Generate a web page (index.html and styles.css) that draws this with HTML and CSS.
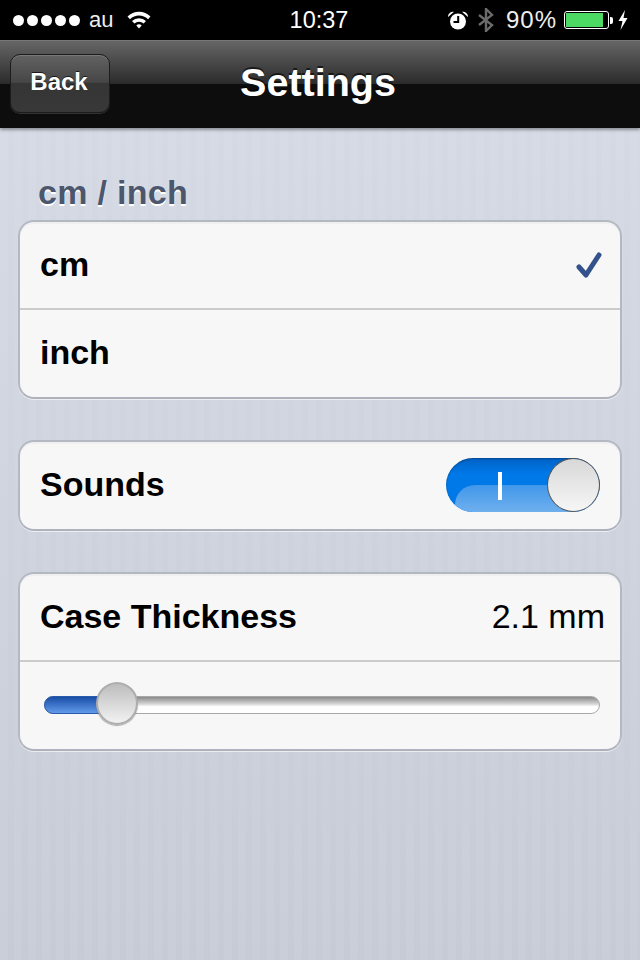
FILE: index.html
```html
<!DOCTYPE html>
<html>

<head>
    <title>Settings</title>
    <link rel="stylesheet" href="styles.css">
</head>

<body>
    <div class="status-bar">
        <div class="status-left">
            <div class="signal">
                <span></span><span></span><span></span><span></span><span></span>
            </div>
            <span class="carrier">au</span>
            <svg class="wifi" width="26" height="20" viewBox="0 0 26 20">
                <path d="M1.5 7.5 A16.5 16.5 0 0 1 24.5 7.5 L22 10.2 A13 13 0 0 0 4 10.2 Z" fill="#fff"/>
                <path d="M6 12 A10 10 0 0 1 20 12 L17.6 14.6 A6.6 6.6 0 0 0 8.4 14.6 Z" fill="#fff"/>
                <path d="M10.3 16.4 A4 4 0 0 1 15.7 16.4 L13 19.4 Z" fill="#fff"/>
            </svg>
        </div>
        <div class="time">10:37</div>
        <div class="status-right">
            <svg class="alarm" width="20" height="19" viewBox="0 0 20 19">
                <circle cx="10" cy="10.5" r="8" fill="#fff"/>
                <path d="M0 6 L6 0.8 A5 5 0 0 0 0 6 Z M20 6 L14 0.8 A5 5 0 0 1 20 6 Z" fill="#fff"/>
                <path d="M10.2 5 V11 H5.5" fill="none" stroke="#000" stroke-width="2"/>
            </svg>
            <svg class="bluetooth" width="16" height="24" viewBox="0 0 16 24">
                <path d="M1 7 L14 17 L8 23 V1 L14 7 L1 17" fill="none" stroke="#6a6a6a" stroke-width="2.4"/>
            </svg>
            <span class="percent">90%</span>
            <div class="battery">
                <div class="battery-level"></div>
            </div>
            <div class="battery-nub"></div>
            <svg class="bolt" width="10" height="20" viewBox="0 0 10 20">
                <path d="M7 0 L0.5 11 H4.5 L2.5 20 L9.5 8 H5.5 Z" fill="#fff"/>
            </svg>
        </div>
    </div>

    <div class="nav-bar">
        <div class="nav-left">
            <button class="back-button">Back</button>
        </div>
        <h1 class="nav-title">Settings</h1>
        <div></div>
    </div>

    <div class="content">
        <h2 class="group-title">cm / inch</h2>
        <div class="group">
            <div class="row row-first">
                <span class="label">cm</span>
                <svg class="check" width="28" height="28" viewBox="0 0 28 28">
                    <path d="M4 15 L11 23 L24 3" fill="none" stroke="#33518a" stroke-width="5" stroke-linecap="round" stroke-linejoin="round"/>
                </svg>
            </div>
            <div class="row row-last">
                <span class="label">inch</span>
            </div>
        </div>

        <div class="group">
            <div class="row row-single">
                <span class="label">Sounds</span>
                <div class="switch">
                    <div class="switch-gloss"></div>
                    <div class="switch-mark"></div>
                    <div class="switch-thumb"></div>
                </div>
            </div>
        </div>

        <div class="group">
            <div class="row row-first">
                <span class="label">Case Thickness</span>
                <span class="value">2.1 mm</span>
            </div>
            <div class="row row-last row-slider">
                <div class="slider">
                    <div class="slider-fill"></div>
                    <div class="slider-thumb"></div>
                </div>
            </div>
        </div>
    </div>
</body>

</html>
```

FILE: styles.css
```css
body {
    margin: 0;
    width: 640px;
    height: 960px;
    overflow: hidden;
    font-family: "Liberation Sans", Arial, sans-serif;
    background: repeating-linear-gradient(90deg, rgba(255, 255, 255, 0.05) 0, rgba(255, 255, 255, 0.05) 8px, rgba(0, 0, 0, 0) 8px, rgba(0, 0, 0, 0) 14px),
        linear-gradient(#d6dbe6, #c6cbd6);
}

.status-bar {
    height: 40px;
    background: #000;
    color: #fff;
    display: grid;
    grid-template-columns: 1fr auto 1fr;
    align-items: center;
}

.status-left,
.status-right {
    display: flex;
    align-items: center;
}

.status-left {
    padding-left: 13px;
}

.status-right {
    justify-content: flex-end;
    padding-right: 12px;
}

.signal {
    display: flex;
    gap: 3px;
}

.signal span {
    width: 11px;
    height: 11px;
    border-radius: 50%;
    background: #fff;
}

.carrier {
    font-size: 22px;
    margin-left: 9px;
    color: #eee;
}

.wifi {
    margin-left: 13px;
    margin-top: -2px;
}

.time {
    font-size: 23.5px;
    padding-right: 2px;
}

.bluetooth {
    margin-left: 10px;
}

.percent {
    font-size: 24px;
    letter-spacing: 1px;
    margin-left: 12px;
    color: #eee;
}

.battery {
    width: 45px;
    height: 18px;
    margin-left: 7px;
    box-sizing: border-box;
    border: 1px solid #fff;
    border-radius: 3px;
    padding: 1px;
}

.battery-level {
    width: 37px;
    height: 100%;
    background: #4cd964;
}

.battery-nub {
    width: 3px;
    height: 7px;
    background: #fff;
    margin-left: 1px;
    border-radius: 0 2px 2px 0;
}

.bolt {
    margin-left: 5px;
}

.nav-bar {
    height: 88px;
    box-sizing: border-box;
    border-top: 1px solid #777;
    background: linear-gradient(#666 0, #2b2b2b 49%, #0d0d0d 50%, #0d0d0d 100%);
    box-shadow: 0 2px 3px rgba(0, 0, 0, 0.35);
    display: grid;
    grid-template-columns: 1fr auto 1fr;
    align-items: center;
    color: #fff;
}

.nav-left {
    padding-left: 10px;
    padding-bottom: 3px;
}

.back-button {
    display: block;
    width: 100px;
    height: 59px;
    padding: 0 2px 3px 0;
    border: 1px solid #1c1c1c;
    border-radius: 10px;
    background: linear-gradient(#626262, #464646 48%, #353535 50%, #383838);
    box-shadow: inset 0 1px 0 rgba(255, 255, 255, 0.15), 0 1px 0 rgba(255, 255, 255, 0.15);
    color: #fff;
    font-family: inherit;
    font-size: 24px;
    font-weight: bold;
    text-shadow: 0 -1px 0 rgba(0, 0, 0, 0.7);
}

.nav-title {
    margin: 0;
    font-size: 39.5px;
    font-weight: bold;
    text-shadow: 0 -2px 0 rgba(0, 0, 0, 0.6);
    padding: 0 4px 4px 0;
}

.content {
    padding: 44px 18px 0;
}

.group-title {
    margin: 0 0 8px 20px;
    height: 40px;
    line-height: 40px;
    font-size: 34px;
    font-weight: bold;
    letter-spacing: 0.3px;
    color: #4c566c;
    text-shadow: 0 2px 0 #fff;
}

.group {
    background: #f7f7f7;
    border: 2px solid #b4b8c2;
    border-bottom-color: #aeb2bc;
    border-radius: 16px;
    box-shadow: 0 1px 0 rgba(255, 255, 255, 0.6), inset 0 2px 1px rgba(0, 0, 0, 0.03);
    margin-bottom: 41px;
}

.row {
    display: flex;
    align-items: center;
    justify-content: space-between;
    box-sizing: border-box;
    padding: 0 20px 2px;
}

.row-first {
    height: 88px;
    border-bottom: 2px solid #cbcbcb;
}

.row-last {
    height: 87px;
}

.row-single {
    height: 87px;
}

.label {
    font-size: 34px;
    font-weight: bold;
    color: #000;
}

.value {
    font-size: 34px;
    color: #000;
    margin-right: -5px;
}

.check {
    margin-top: 4px;
    margin-right: -3px;
}

.switch {
    position: relative;
    width: 154px;
    height: 54px;
    border-radius: 27px;
    background: linear-gradient(#0062c6, #0079e8 30%);
    overflow: hidden;
    box-shadow: inset 0 1px 2px rgba(0, 0, 0, 0.3);
}

.switch-gloss {
    position: absolute;
    left: 9px;
    top: 27px;
    width: 145px;
    height: 27px;
    border-radius: 20px 0 0 0;
    background: linear-gradient(#4097ea, #6fb0ee);
}

.switch-mark {
    position: absolute;
    left: 52px;
    top: 14px;
    width: 4px;
    height: 28px;
    background: #fff;
}

.switch-thumb {
    position: absolute;
    right: 0;
    top: 0;
    width: 53px;
    height: 54px;
    box-sizing: border-box;
    border: 1px solid #555;
    border-radius: 50%;
    background: linear-gradient(#d8d8d8, #f6f6f6);
}

.row-slider {
    padding: 0 20px 2px 24px;
}

.slider {
    position: relative;
    width: 100%;
    height: 18px;
    box-sizing: border-box;
    border: 1px solid #a8a8a8;
    border-radius: 9px;
    background: linear-gradient(#8a8a8a, #d8d8d8 45%, #fff 60%, #fff);
}

.slider-fill {
    position: absolute;
    left: -1px;
    top: -1px;
    width: 74px;
    height: 18px;
    box-sizing: border-box;
    border: 1px solid #2a5cab;
    border-radius: 9px 0 0 9px;
    background: linear-gradient(#1a4ea6, #619aea);
}

.slider-thumb {
    position: absolute;
    left: 51px;
    top: -15px;
    width: 42px;
    height: 43px;
    box-sizing: border-box;
    border: 2px solid #adadad;
    border-radius: 50%;
    background: linear-gradient(#bdbdbd, #f2f2f2);
    box-shadow: 0 1px 1px rgba(0, 0, 0, 0.3);
}
```
